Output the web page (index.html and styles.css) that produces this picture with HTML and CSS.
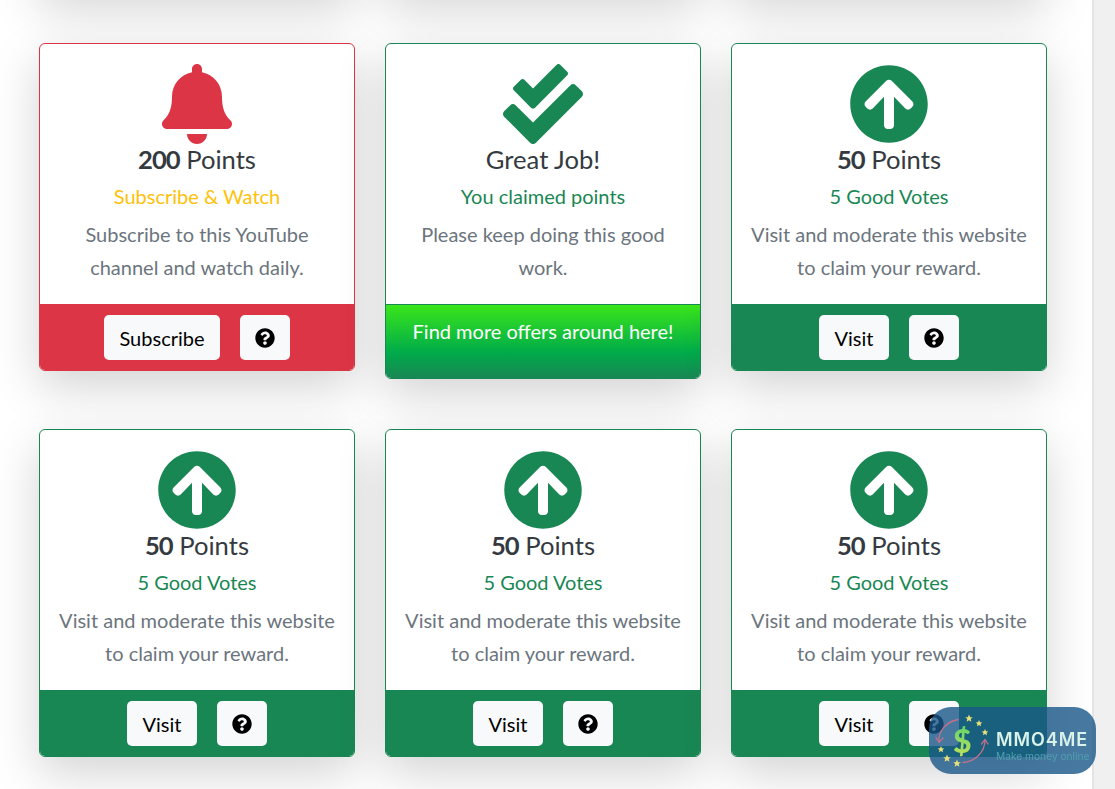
FILE: index.html
```html
<!DOCTYPE html>
<html lang="en">
<head>
<meta charset="utf-8">
<title>Offers</title>
<link rel="stylesheet" href="styles.css">
</head>
<body>
<svg class="defs" width="0" height="0">
  <symbol id="bell" viewBox="0 0 448 512"><path d="M224 512c35.32 0 63.97-28.65 63.97-64H160.03c0 35.35 28.65 64 63.97 64zm215.39-149.71c-19.32-20.76-55.47-51.99-55.47-154.29 0-77.7-54.48-139.9-127.94-155.16V32c0-17.67-14.32-32-31.98-32s-31.98 14.33-31.98 32v20.84C118.56 68.1 64.08 130.3 64.08 208c0 102.3-36.15 133.53-55.47 154.29-6 6.45-8.66 14.16-8.61 21.71.11 16.4 12.98 32 32.1 32h383.8c19.12 0 32-15.6 32.1-32 .05-7.55-2.61-15.27-8.61-21.71z"/></symbol>
  <symbol id="check" viewBox="0 0 512 512"><path d="M505 174.8l-39.6-39.6c-9.4-9.4-24.6-9.4-33.9 0L192 374.7 80.6 263.2c-9.4-9.4-24.6-9.4-33.9 0L7 302.9c-9.4 9.4-9.4 24.6 0 34L175 505c9.4 9.4 24.6 9.4 33.9 0l296-296.2c9.4-9.5 9.4-24.7.1-34zm-324.3 106c6.2 6.3 16.4 6.3 22.6 0l208-208.2c6.2-6.3 6.2-16.4 0-22.6L366.1 4.7c-6.2-6.3-16.4-6.3-22.6 0L192 156.2l-55.4-55.5c-6.2-6.3-16.4-6.3-22.6 0L68.7 146c-6.2 6.3-6.2 16.4 0 22.6l112 112.2z"/></symbol>
  <symbol id="up" viewBox="0 0 512 512"><path d="M8 256C8 119 119 8 256 8s248 111 248 248-111 248-248 248S8 393 8 256zm143.6 28.9l72.4-75.5V392c0 13.3 10.7 24 24 24h16c13.3 0 24-10.7 24-24V209.4l72.4 75.5c9.3 9.7 24.8 9.9 34.3.4l10.9-11c9.4-9.4 9.4-24.6 0-33.9L273 107.7c-9.4-9.4-24.6-9.4-33.9 0L106.3 240.4c-9.4 9.4-9.4 24.6 0 33.9l10.9 11c9.6 9.5 25.1 9.3 34.4-.4z"/></symbol>
  <symbol id="help" viewBox="0 0 512 512"><path d="M504 256c0 136.997-111.043 248-248 248S8 392.997 8 256C8 119.083 119.043 8 256 8s248 111.083 248 248zM262.655 90c-54.497 0-89.255 22.957-116.549 63.758-3.536 5.286-2.353 12.415 2.715 16.258l34.699 26.31c5.205 3.947 12.621 3.008 16.665-2.122 17.864-22.658 30.113-35.797 57.303-35.797 20.429 0 45.698 13.148 45.698 32.958 0 14.976-12.363 22.667-32.534 33.976C247.128 238.528 216 254.941 216 296v4c0 6.627 5.373 12 12 12h56c6.627 0 12-5.373 12-12v-1.333c0-28.462 83.186-29.647 83.186-106.667 0-58.002-60.165-102-116.531-102zM256 338c-25.365 0-46 20.635-46 46 0 25.364 20.635 46 46 46s46-20.636 46-46c0-25.365-20.635-46-46-46z"/></symbol>
  <symbol id="star" viewBox="-4 -4 8 8" overflow="visible"><polygon points="0,-4 1.1,-1.3 3.8,-1.2 1.7,0.6 2.4,3.2 0,1.8 -2.4,3.2 -1.7,0.6 -3.8,-1.2 -1.1,-1.3"/></symbol>
</svg>
<div class="viewport">
  <main class="page">
    <div class="grid">
      <div class="ghost"></div><div class="ghost"></div><div class="ghost"></div>

      <article class="card card-red">
        <div class="card-body">
          <svg class="icon icon-bell"><use href="#bell"/></svg>
          <h4 class="points"><b>200</b> Points</h4>
          <h5 class="sub text-warning">Subscribe &amp; Watch</h5>
          <p class="desc">Subscribe to this YouTube channel and watch daily.</p>
        </div>
        <div class="card-foot foot-red">
          <button class="btn">Subscribe</button>
          <button class="btn btn-help"><svg class="help"><use href="#help"/></svg></button>
        </div>
      </article>

      <article class="card card-green">
        <div class="card-body">
          <svg class="icon icon-check"><use href="#check"/></svg>
          <h4 class="points">Great Job!</h4>
          <h5 class="sub text-success">You claimed points</h5>
          <p class="desc">Please keep doing this good work.</p>
        </div>
        <div class="card-foot foot-gradient">Find more offers around here!</div>
      </article>

      <article class="card card-green">
        <div class="card-body">
          <svg class="icon icon-up"><use href="#up"/></svg>
          <h4 class="points"><b>50</b> Points</h4>
          <h5 class="sub text-success">5 Good Votes</h5>
          <p class="desc">Visit and moderate this website to claim your reward.</p>
        </div>
        <div class="card-foot foot-green">
          <button class="btn">Visit</button>
          <button class="btn btn-help"><svg class="help"><use href="#help"/></svg></button>
        </div>
      </article>

      <article class="card card-green">
        <div class="card-body">
          <svg class="icon icon-up"><use href="#up"/></svg>
          <h4 class="points"><b>50</b> Points</h4>
          <h5 class="sub text-success">5 Good Votes</h5>
          <p class="desc">Visit and moderate this website to claim your reward.</p>
        </div>
        <div class="card-foot foot-green">
          <button class="btn">Visit</button>
          <button class="btn btn-help"><svg class="help"><use href="#help"/></svg></button>
        </div>
      </article>

      <article class="card card-green">
        <div class="card-body">
          <svg class="icon icon-up"><use href="#up"/></svg>
          <h4 class="points"><b>50</b> Points</h4>
          <h5 class="sub text-success">5 Good Votes</h5>
          <p class="desc">Visit and moderate this website to claim your reward.</p>
        </div>
        <div class="card-foot foot-green">
          <button class="btn">Visit</button>
          <button class="btn btn-help"><svg class="help"><use href="#help"/></svg></button>
        </div>
      </article>

      <article class="card card-green">
        <div class="card-body">
          <svg class="icon icon-up"><use href="#up"/></svg>
          <h4 class="points"><b>50</b> Points</h4>
          <h5 class="sub text-success">5 Good Votes</h5>
          <p class="desc">Visit and moderate this website to claim your reward.</p>
        </div>
        <div class="card-foot foot-green">
          <button class="btn">Visit</button>
          <button class="btn btn-help"><svg class="help"><use href="#help"/></svg></button>
        </div>
      </article>
    </div>
  </main>
  <div class="scrollbar"></div>
</div>

<aside class="badge">
  <div class="badge-logo">
    <svg class="badge-art" viewBox="0 0 60 60" width="60" height="60">
      <g fill="#e9e27a">
        <use href="#star" x="32" y="3.5" width="8" height="8"/>
        <use href="#star" x="42.5" y="9" width="7" height="7"/>
        <use href="#star" x="48.5" y="18" width="7" height="7"/>
        <use href="#star" x="4.5" y="35" width="7" height="7"/>
        <use href="#star" x="10" y="43.5" width="8" height="8"/>
        <use href="#star" x="20" y="48.5" width="8" height="8"/>
      </g>
      <g fill="none" stroke="#c4708a" stroke-width="1.3" stroke-linecap="round">
        <path d="M25 8.5 C13 11 5 20 6 31"/>
        <path d="M3 26.5 L6 31.5 L10 27"/>
        <path d="M30 51.5 C42 51 52 41 52 29"/>
        <path d="M48.5 33 L52 28.5 L55 33"/>
      </g>
    </svg>
    <span class="badge-dollar">$</span>
  </div>
  <div class="badge-text">
    <div class="badge-name">MMO4ME</div>
    <div class="badge-tag">Make money online</div>
  </div>
</aside>
</body>
</html>
```
FILE: styles.css
```css
* { box-sizing: border-box; }
html, body { margin: 0; height: 789px; overflow: hidden; }
body {
  background: #fff;
  font-family: "Lato", "Liberation Sans", sans-serif;
  font-size: 20px;
  color: #212529;
}
.defs { display: block; }
.viewport { display: flex; height: 789px; overflow: hidden; }
.page { flex: 1 1 auto; min-width: 0; padding: 0 45px 0 39px; }
.grid {
  display: grid;
  grid-template-columns: repeat(3, 316px);
  column-gap: 30px;
  row-gap: 50px;
  align-items: start;
  margin-top: -57px;
}
.ghost { height: 50px; border-radius: 6px; box-shadow: 0 16px 48px rgba(0,0,0,.175); }
.scrollbar {
  flex: 0 0 23px;
  background: #f0f0f0;
  border-left: 2px solid #e4e4e4;
}
.card {
  background: #fff;
  border: 1px solid;
  border-radius: 6px;
  overflow: hidden;
  box-shadow: 0 16px 48px rgba(0,0,0,.175);
  display: flex;
  flex-direction: column;
}
.card-red { border-color: #dc3545; }
.card-green { border-color: #198754; }
.card-body {
  height: 260px;
  padding: 20px 16px 0;
  text-align: center;
}
.icon { display: block; height: 80px; margin: 0 auto; }
.icon-bell { width: 70px; fill: #dc3545; }
.icon-check { width: 80px; fill: #198754; }
.icon-up { width: 80px; fill: #198754; }
.points {
  margin: 1px 0 0;
  font-size: 25.6px;
  line-height: 29px;
  font-weight: 400;
  color: #343a40;
}
.points b { font-weight: 700; letter-spacing: -1px; }
.sub {
  margin: 10px 0 0;
  font-size: 20px;
  line-height: 24px;
  font-weight: 400;
}
.text-warning { color: #ffc107; }
.text-success { color: #198754; }
.desc {
  margin: 10px 0 0;
  font-size: 20px;
  line-height: 33px;
  color: #6c757d;
}
.card-foot {
  display: flex;
  justify-content: center;
  gap: 20px;
  padding: 10px 0 10px;
  border-top: 1px solid transparent;
}
.foot-red { background: #dc3545; }
.foot-green { background: #198754; }
.foot-gradient {
  height: 74px;
  padding: 11px 0 0;
  border-top: 1px solid #198754;
  background: linear-gradient(180deg, #3ae61a 0%, #00ab4a 65%, #198754 100%);
  color: #fff;
  font-size: 20px;
  line-height: 30px;
}
.btn {
  height: 45px;
  min-width: 70px;
  padding: 0 15px;
  background: #f8f9fa;
  border: 0;
  border-radius: 5px;
  font-family: inherit;
  font-size: 20px;
  color: #000;
  display: flex;
  align-items: center;
  justify-content: center;
}
.btn-help { width: 50px; min-width: 50px; padding: 0; }
.help { width: 20px; height: 20px; fill: #000; display: block; }
.badge {
  position: fixed;
  left: 929px;
  top: 707px;
  width: 167px;
  height: 67px;
  border-radius: 22px;
  background: rgba(24, 86, 136, .8);
  display: flex;
  align-items: center;
  padding-left: 4px;
  gap: 3px;
}
.badge-logo { position: relative; flex: 0 0 60px; height: 60px; }
.badge-art { display: block; }
.badge-dollar {
  position: absolute;
  left: 20px;
  top: 11px;
  font-family: "Lato", sans-serif;
  font-weight: 900;
  font-size: 32px;
  line-height: 38px;
  background: linear-gradient(180deg, #58d36a, #c9e25a);
  -webkit-background-clip: text;
  background-clip: text;
  color: transparent;
}
.badge-text { padding-top: 10px; }
.badge-name {
  font-family: "Inter", "Open Sans", sans-serif;
  font-weight: 600;
  font-size: 18px;
  line-height: 20px;
  letter-spacing: .9px;
  color: #d9f2ea;
}
.badge-tag {
  font-family: "Inter", "Open Sans", sans-serif;
  font-size: 10.2px;
  line-height: 12px;
  color: #4f9fb0;
}
```
